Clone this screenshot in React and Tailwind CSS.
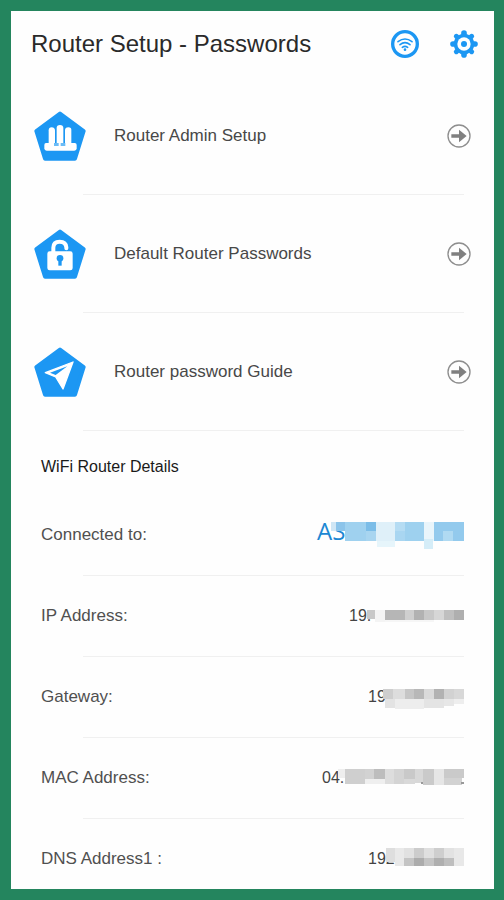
const menu = [
  { label: 'Router Admin Setup', icon: RouterGlyph },
  { label: 'Default Router Passwords', icon: LockGlyph },
  { label: 'Router password Guide', icon: SendGlyph },
];

// mask: [x, y, width, height, color] tiles drawn over the value
const details = [
  {
    label: 'Connected to:',
    value: 'AS',
    className: 'w-[147px] text-2xl leading-6 text-[#1c87d3] font-["Open_Sans",sans-serif]',
    mask: [
      [14, 3, 5, 9, '#cfe6f5'], [19, 3, 10, 9, '#8cc4ea'], [28, 3, 21, 19, '#9fd1ef'], [49, 3, 10, 9, '#7bbde8'],
      [49, 12, 10, 10, '#a8d5f0'], [59, 3, 19, 19, '#dff0f9'], [60, 22, 18, 6, '#e6f5fb'],
      [78, 3, 10, 9, '#b5dcf3'], [88, 3, 19, 19, '#9ed1ef'], [78, 12, 10, 10, '#a9d6f1'],
      [107, 3, 10, 19, '#e9f5fb'], [107, 20, 9, 10, '#d5edf8'], [117, 3, 30, 19, '#93caed'], [126, 12, 10, 10, '#b0daf2'],
    ],
  },
  {
    label: 'IP Address:',
    value: '19.',
    className: 'w-[115px] text-[#444444]',
    mask: [
      [18, 6, 8, 9, '#c8c8c8'], [26, 6, 10, 12, '#f4f4f4'], [36, 16, 49, 2, '#f6f6f6'], [36, 6, 20, 10, '#b6b6b6'], [56, 6, 9, 10, '#cfcfcf'],
      [65, 6, 10, 10, '#b2b2b2'], [75, 6, 10, 10, '#c8c8c8'], [85, 6, 10, 10, '#d6d6d6'],
      [95, 6, 10, 10, '#bfbfbf'], [105, 6, 10, 10, '#afafaf'],
    ],
  },
  {
    label: 'Gateway:',
    value: '19',
    className: 'w-[96px] text-[#444444]',
    mask: [
      [15, 4, 10, 10, '#cecece'], [25, 4, 12, 10, '#dddddd'], [37, 4, 9, 10, '#c6c6c6'], [46, 4, 10, 10, '#b8b8b8'],
      [56, 4, 10, 10, '#dadada'], [66, 4, 10, 10, '#b2b2b2'], [76, 4, 10, 10, '#d2d2d2'], [86, 4, 10, 10, '#d8d8d8'],
      [17, 14, 10, 9, '#e3e3e3'], [27, 14, 29, 10, '#ededed'], [56, 14, 20, 9, '#e4e4e4'],
      [76, 14, 10, 7, '#e7e7e7'], [86, 14, 10, 5, '#eeeeee'],
    ],
  },
  {
    label: 'MAC Address:',
    value: '04.',
    className: 'w-[142px] text-[#444444]',
    mask: [
      [16, 3, 7, 9, '#eeeeee'], [23, 3, 20, 15, '#cfcfcf'], [43, 3, 9, 10, '#d2d2d2'], [52, 3, 11, 10, '#bdbdbd'],
      [43, 13, 20, 5, '#efefef'], [63, 3, 9, 15, '#dddddd'], [72, 3, 10, 15, '#d4d4d4'], [82, 3, 11, 10, '#c9c9c9'],
      [82, 13, 11, 5, '#d9d9d9'], [93, 3, 8, 14, '#d8d8d8'], [101, 3, 11, 16, '#cacaca'], [112, 3, 10, 16, '#e6e6e6'],
      [122, 3, 20, 9, '#cacaca'], [122, 12, 18, 7, '#d2d2d2'], [99, 16, 2, 2, '#999999'], [139, 16, 3, 2, '#999999'],
    ],
  },
  {
    label: 'DNS Address1 :',
    value: '192',
    className: 'w-[96px] text-[#444444]',
    mask: [
      [18, 1, 9, 14, '#dedede'], [27, 1, 9, 18, '#e9e9e9'], [36, 1, 10, 10, '#e1e1e1'], [46, 1, 10, 10, '#cccccc'],
      [56, 1, 10, 10, '#dfdfdf'], [66, 1, 10, 10, '#cecece'], [76, 1, 10, 10, '#e2e2e2'], [86, 1, 10, 18, '#e8e8e8'],
      [36, 11, 10, 8, '#c4c4c4'], [46, 11, 10, 8, '#acacac'], [56, 11, 10, 8, '#c4c4c4'],
      [66, 11, 10, 8, '#afafaf'], [76, 11, 10, 8, '#bebebe'],
    ],
  },
];

function RouterGlyph() {
  return (
    <g fill="#fff">
      <path d="M44 96V58q0-9 9-9t10 9v38z" />
      <path d="M68 96V51q0-9 10-9t10 9v45z" />
      <path d="M93 96V58q0-9 10-9t9 9v38z" />
      <path d="M36 96h86q6 0 6 6v10q0 7-7 7H38q-7 0-7-7v-10q0-6 5-6z" />
      <path d="M60 96h14v9H60zM80 96h14v9H80z" fill="#6bbcf7" />
    </g>
  );
}

function LockGlyph() {
  return (
    <g>
      <path d="M58 70V56q0-18 19-18t20 17v3" fill="none" stroke="#fff" strokeWidth="12" strokeLinecap="round" />
      <rect x="40" y="67" width="76" height="57" rx="7" fill="#fff" />
      <circle cx="78" cy="88" r="10" fill="#1c97f3" />
      <path d="M73 90h10v20H73z" fill="#1c97f3" />
    </g>
  );
}

function SendGlyph() {
  return (
    <g>
      <path d="M117 45L34 77l31 13 22 36z" fill="#fff" stroke="#fff" strokeWidth="4" strokeLinejoin="round" />
      <path d="M100 58L48 77l17 7z" fill="#1c97f3" />
    </g>
  );
}

function Pentagon({ children }) {
  return (
    <svg viewBox="0 0 156 150" className="w-[52px] h-[50px] shrink-0" aria-hidden="true">
      <path d="M78 8L149 60 123 143H33L7 60z" fill="#1c97f3" stroke="#1c97f3" strokeWidth="12" strokeLinejoin="round" />
      {children}
    </svg>
  );
}

function ArrowCircle() {
  return (
    <svg viewBox="0 0 72 72" className="size-6 shrink-0" aria-hidden="true">
      <circle cx="36" cy="36" r="33" fill="none" stroke="#8e8e8e" strokeWidth="4" />
      <path d="M13 31h23V17l23 19-23 19V41H13z" fill="#808080" />
    </svg>
  );
}

function WifiCircle() {
  return (
    <svg viewBox="0 0 84 84" className="size-7" fill="none" stroke="#1c97f3" aria-hidden="true">
      <circle cx="42" cy="42" r="37" strokeWidth="10" />
      <g strokeWidth="5" strokeLinecap="round">
        <path d="M21 35q21-16 42 0" />
        <path d="M27 44q15-12 30 0" />
        <path d="M34 52q8-6 16 0" />
      </g>
      <circle cx="42" cy="59" r="4" fill="#1c97f3" stroke="none" />
    </svg>
  );
}

function Gear() {
  return (
    <svg viewBox="0 0 84 84" className="size-7" aria-hidden="true">
      <g stroke="#1c97f3" strokeWidth="17" strokeLinecap="round">
        <path d="M42 9v66M9 42h66" />
        <path d="M19 19l46 46M65 19L19 65" strokeWidth="15" />
      </g>
      <circle cx="42" cy="42" r="31" fill="#1c97f3" />
      <circle cx="42" cy="42" r="20" fill="#fff" />
      <circle cx="42" cy="42" r="9" fill="#1c97f3" />
    </svg>
  );
}

function Divider() {
  return <div className="h-px ml-[72px] mr-[30px] bg-[#f0f0f0]" />;
}

export default function App() {
  return (
    <div className='min-h-screen bg-[#fefefe] border-[11px] border-r-[10px] border-[#24855e] font-["Liberation_Sans",Arial,sans-serif]'>
      <header className="flex items-center justify-between h-[66px] pl-5 pr-4">
        <h1 className="text-2xl text-[#2a2a2a]">Router Setup - Passwords</h1>
        <div className="flex items-center gap-[31px]">
          <button aria-label="WiFi status">
            <WifiCircle />
          </button>
          <button aria-label="Settings">
            <Gear />
          </button>
        </div>
      </header>

      {/* Menu */}
      <nav>
        {menu.map(({ label, icon: Icon }) => (
          <div key={label}>
            <button className="flex items-center w-full h-[117px] px-[23px] text-left">
              <Pentagon>
                <Icon />
              </Pentagon>
              <span className="flex-1 ml-7 text-[17px] leading-6 text-[#484848]">{label}</span>
              <ArrowCircle />
            </button>
            <Divider />
          </div>
        ))}
      </nav>

      {/* Router details */}
      <section>
        <h2 className="px-[30px] pt-6 pb-3 text-base text-[#1a1a1a]">WiFi Router Details</h2>
        <dl>
          {details.map((row, i) => (
            <div key={row.label}>
              {i > 0 && <Divider />}
              <div className={`flex items-baseline justify-between px-[30px] pt-7 ${i < details.length - 1 ? 'pb-7' : 'pb-4'}`}>
                <dt className="text-[17px] leading-6 text-[#505050]">{row.label}</dt>
                <dd className={`relative ${row.className}`}>
                  {row.value}
                  <svg className="absolute top-0 left-0 w-full h-8" aria-hidden="true">
                    {row.mask.map(([x, y, w, h, fill]) => (
                      <rect key={`${x}-${y}`} x={x} y={y} width={w} height={h} fill={fill} />
                    ))}
                  </svg>
                </dd>
              </div>
            </div>
          ))}
        </dl>
      </section>
    </div>
  );
}
